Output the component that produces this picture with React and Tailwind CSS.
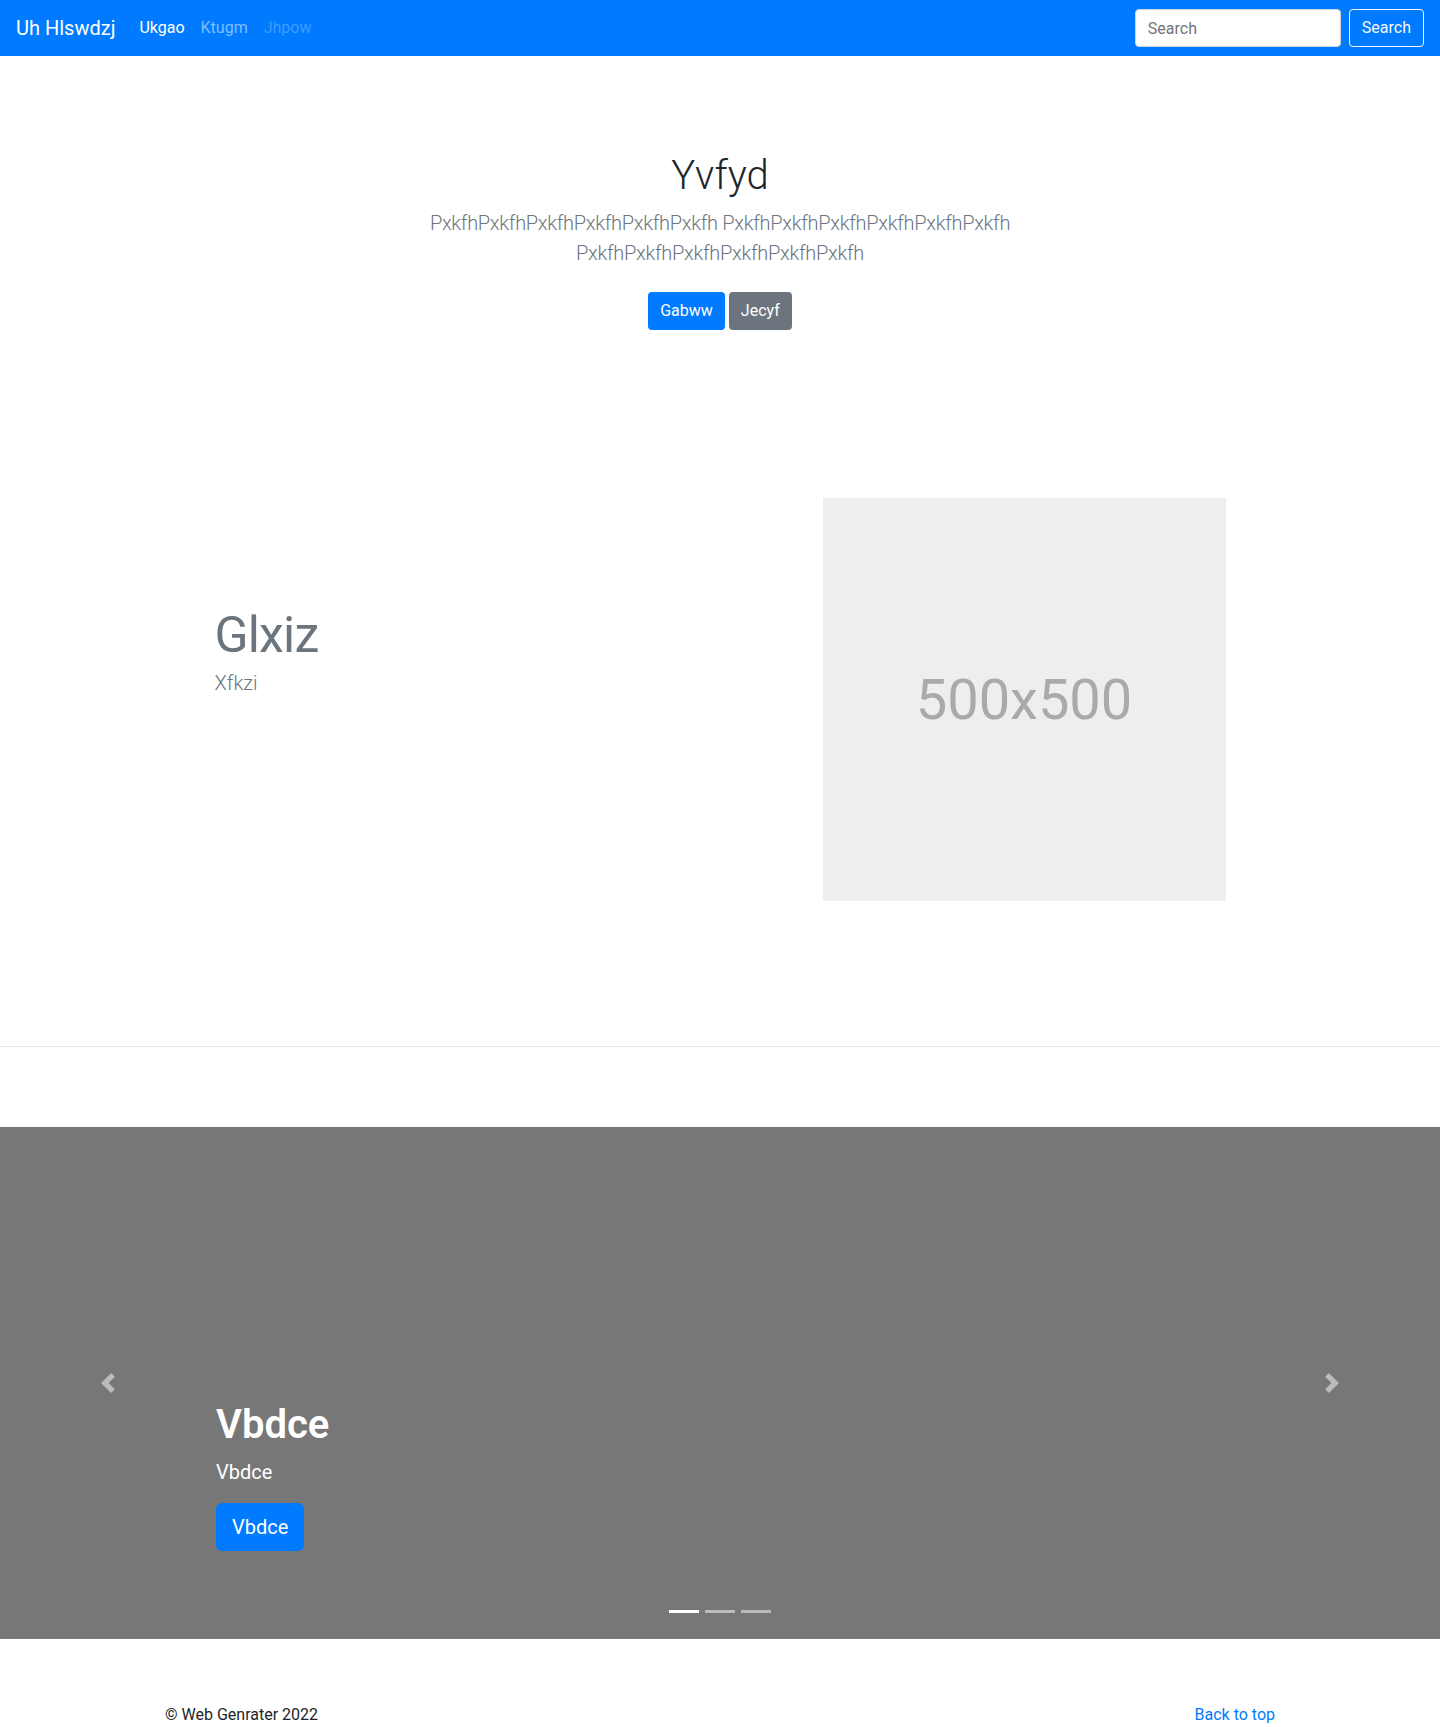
import React from 'react'

const font = { fontFamily: 'Roboto, "Noto Sans", "Liberation Sans", sans-serif' }

function Chevron({ dir }) {
  const d = dir === 'prev'
    ? 'M5.25 0l-4 4 4 4 1.5-1.5-2.5-2.5 2.5-2.5-1.5-1.5z'
    : 'M2.75 0l-1.5 1.5 2.5 2.5-2.5 2.5 1.5 1.5 4-4-4-4z'
  return (
    <svg viewBox="0 0 8 8" className="w-5 h-5" fill="#fff">
      <path d={d} />
    </svg>
  )
}

function Navbar() {
  return (
    <nav className="h-14 bg-[#007bff] flex items-center justify-between px-4">
      <div className="flex items-center">
        <a href="#" className="text-white text-[20px] leading-[30px] py-[5px] mr-4">Uh Hlswdzj</a>
        <ul className="flex items-center">
          <li><a href="#" className="block px-2 py-2 text-white leading-6">Ukgao</a></li>
          <li><a href="#" className="block px-2 py-2 text-white/50 leading-6">Ktugm</a></li>
          <li><span className="block px-2 py-2 text-white/25 leading-6">Jhpow</span></li>
        </ul>
      </div>
      <form className="flex items-center" onSubmit={(e) => e.preventDefault()}>
        <input
          type="text"
          placeholder="Search"
          className="w-[206px] h-[38px] mr-2 bg-white border border-[#ced4da] rounded px-3 text-base text-[#495057] placeholder:text-[#6c757d] focus:outline-none"
        />
        <button className="h-[38px] px-3 border border-[#f8f9fa] rounded text-[#f8f9fa] text-base leading-6">
          Search
        </button>
      </form>
    </nav>
  )
}

function Jumbotron() {
  return (
    <section className="py-24 text-center">
      <h1 className="text-[40px] leading-[48px] font-light text-[#212529] mb-2">Yvfyd</h1>
      <p className="max-w-[700px] mx-auto text-[20px] leading-[30px] font-light tracking-[-0.3px] text-[#6c757d] mb-4">
        PxkfhPxkfhPxkfhPxkfhPxkfhPxkfh PxkfhPxkfhPxkfhPxkfhPxkfhPxkfh PxkfhPxkfhPxkfhPxkfhPxkfhPxkfh
      </p>
      <div className="py-2 flex justify-center gap-1">
        <a href="#" className="h-[38px] px-3 flex items-center rounded bg-[#007bff] text-white text-base">Gabww</a>
        <a href="#" className="h-[38px] px-3 flex items-center rounded bg-[#6c757d] text-white text-base">Jecyf</a>
      </div>
    </section>
  )
}

function Featurette() {
  return (
    <div className="w-[1011px] mx-auto mt-16 flex justify-between">
      <div className="pt-[112px]">
        <h2 className="text-[50px] leading-[50px] tracking-[-0.8px] text-[#6c757d] mb-2">Glxiz</h2>
        <p className="text-[20px] leading-[30px] font-light text-[#6c757d]">Xfkzi</p>
      </div>
      <div className="w-[403px] h-[403px] bg-[#eeeeee] flex items-center justify-center">
        <span className="text-[#aaaaaa] text-[56px] leading-none">500x500</span>
      </div>
    </div>
  )
}

function Carousel() {
  return (
    <div className="relative h-[512px] bg-[#777777] mt-20">
      <a href="#" className="absolute left-0 top-0 bottom-0 w-[15%] flex items-center justify-center opacity-50">
        <Chevron dir="prev" />
      </a>
      <a href="#" className="absolute right-0 top-0 bottom-0 w-[15%] flex items-center justify-center opacity-50">
        <Chevron dir="next" />
      </a>
      <div className="absolute left-[15%] right-[15%] bottom-12 py-5 text-white text-left">
        <h1 className="text-[40px] leading-[48px] font-semibold mb-2">Vbdce</h1>
        <p className="text-[20px] leading-[30px] mb-4">Vbdce</p>
        <p className="flex mb-5">
          <a href="#" className="flex items-center h-12 px-4 rounded-md bg-[#007bff] text-white text-[20px]">Vbdce</a>
        </p>
      </div>
      <ol className="absolute left-0 right-0 bottom-[26px] flex justify-center gap-[6px]">
        <li className="w-[30px] h-[3px] bg-white"></li>
        <li className="w-[30px] h-[3px] bg-white/50"></li>
        <li className="w-[30px] h-[3px] bg-white/50"></li>
      </ol>
    </div>
  )
}

export default function App() {
  return (
    <div className="bg-white text-[#212529] text-base leading-6" style={font}>
      <Navbar />
      <Jumbotron />
      <Featurette />
      <hr className="mt-[145px] border-0 border-t border-[#e5e5e5]" />
      <Carousel />
      <footer className="w-[1140px] mx-auto px-[15px] mt-16 pb-12 flex justify-between">
        <p>© Web Genrater 2022</p>
        <a href="#" className="text-[#007bff]">Back to top</a>
      </footer>
    </div>
  )
}
